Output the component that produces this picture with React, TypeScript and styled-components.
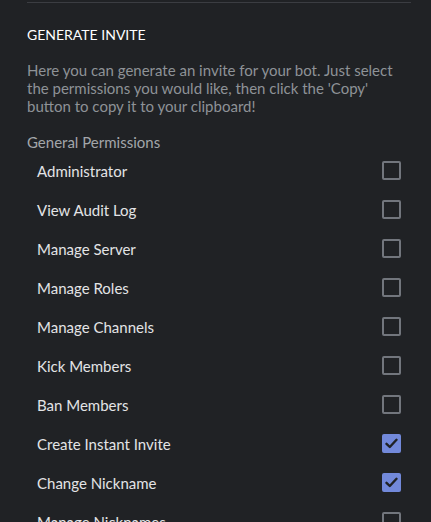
import React, { useState } from 'react'
import styled, { createGlobalStyle } from 'styled-components'

const GlobalStyle = createGlobalStyle`
  html, body {
    margin: 0;
    padding: 0;
    background: #202225;
  }
  body {
    font-family: Lato, "Open Sans", sans-serif;
    -webkit-font-smoothing: antialiased;
  }
`

const Section = styled.section`
  margin: 2px 20px 0 27px;
  border-top: 1px solid #3b3d42;
`

const Title = styled.h2`
  margin: 23px 0 0;
  font-size: 14px;
  font-weight: 400;
  line-height: 18px;
  color: #ffffff;
`

const Description = styled.p`
  margin: 17px 0 0;
  font-size: 15px;
  line-height: 18px;
  color: #8e9297;
`

const GroupLabel = styled.h3`
  margin: 18px 0 0;
  font-size: 15px;
  font-weight: 400;
  line-height: 18px;
  color: #a3a6aa;
`

const List = styled.ul`
  list-style: none;
  margin: 0;
  padding: 0 10px;
`

const Row = styled.li`
  display: flex;
  align-items: center;
  justify-content: space-between;
  height: 39px;
  font-size: 15px;
  color: #e3e4e6;
  cursor: pointer;
`

const Box = styled.span<{ $checked: boolean }>`
  box-sizing: border-box;
  width: 19px;
  height: 19px;
  border-radius: 2px;
  border: 2px solid ${p => (p.$checked ? '#7289da' : '#72767d')};
  background: ${p => (p.$checked ? '#7289da' : 'transparent')};
  display: flex;
  align-items: center;
  justify-content: center;
`

const permissions = [
  { name: 'Administrator', on: false },
  { name: 'View Audit Log', on: false },
  { name: 'Manage Server', on: false },
  { name: 'Manage Roles', on: false },
  { name: 'Manage Channels', on: false },
  { name: 'Kick Members', on: false },
  { name: 'Ban Members', on: false },
  { name: 'Create Instant Invite', on: true },
  { name: 'Change Nickname', on: true },
  { name: 'Manage Nicknames', on: false },
  { name: 'Manage Emojis', on: false },
  { name: 'Manage Webhooks', on: false },
]

const Check = () => (
  <svg width="13" height="13" viewBox="0 0 13 13">
    <path d="M1.5 6.8 L4.8 10 L11.5 2.8" fill="none" stroke="#202225" strokeWidth="2.4" strokeLinecap="round" strokeLinejoin="round" />
  </svg>
)

export default function App() {
  const [state, setState] = useState(permissions)
  const toggle = (i: number) =>
    setState(s => s.map((p, j) => (j === i ? { ...p, on: !p.on } : p)))

  return (
    <>
      <GlobalStyle />
      <Section>
        <Title>GENERATE INVITE</Title>
        <Description>
          Here you can generate an invite for your bot. Just select the permissions you would
          like, then click the 'Copy' button to copy it to your clipboard!
        </Description>
        <GroupLabel>General Permissions</GroupLabel>
        <List>
          {state.map((p, i) => (
            <Row key={p.name} onClick={() => toggle(i)}>
              {p.name}
              <Box $checked={p.on}>{p.on && <Check />}</Box>
            </Row>
          ))}
        </List>
      </Section>
    </>
  )
}
